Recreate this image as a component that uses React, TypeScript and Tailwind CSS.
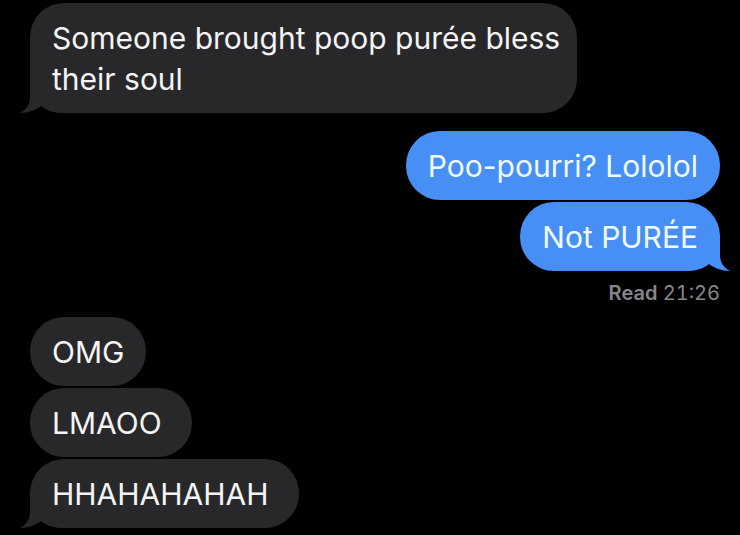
import React from 'react';
import clsx from 'clsx';

type Message = {
  text: string;
  sent?: boolean;
  tail?: boolean;
  long?: boolean;
};

const groups: { messages: Message[]; readAt?: string }[] = [
  { messages: [{ text: 'Someone brought poop purée bless their soul', tail: true, long: true }] },
  {
    messages: [
      { text: 'Poo-pourri? Lololol', sent: true },
      { text: 'Not PURÉE', sent: true, tail: true },
    ],
    readAt: '21:26',
  },
  { messages: [{ text: 'OMG' }, { text: 'LMAOO\u00a0' }, { text: 'HHAHAHAHAH\u00a0', tail: true }] },
];

const Tail: React.FC<{ sent?: boolean }> = ({ sent }) => (
  <svg
    viewBox="0 0 44 36"
    aria-hidden="true"
    className={clsx(
      'absolute bottom-0 h-9 w-11',
      sent ? '-right-2.5 -scale-x-100 fill-[#478ff5]' : '-left-2.5 fill-[#28282b]'
    )}
  >
    <path d="M10 0V20C10 27 7 32 0 36C8 36 16 33 21 29C26 33 32 36 44 36V0Z" />
  </svg>
);

const Bubble: React.FC<{ message: Message }> = ({ message }) => (
  <li
    className={clsx(
      'relative max-w-[79.3%] rounded-[34px] pt-[15px] pb-[13px] pl-[22px]',
      message.long ? 'pr-3' : 'pr-[22px]',
      message.sent ? 'self-end bg-[#478ff5] text-[#f0fbff]' : 'self-start bg-[#28282b] text-[#f4f4f4]'
    )}
  >
    {message.tail && <Tail sent={message.sent} />}
    <p className="relative text-[30px] leading-[41px]">{message.text}</p>
  </li>
);

const App: React.FC = () => {
  return (
    <main className="flex min-h-screen flex-col gap-[18px] bg-black pt-[3px] pr-5 pb-1.5 pl-[30px] font-['Inter',sans-serif]">
      {groups.map((group, i) => (
        <section key={i}>
          <ul className="flex flex-col gap-0.5">
            {group.messages.map((message) => (
              <Bubble key={message.text} message={message} />
            ))}
          </ul>
          {group.readAt && (
            <p className="mt-3.5 -mb-0.5 text-right text-[20px] leading-4 text-[#87878b] tabular-nums">
              <span className="font-semibold">Read</span> {group.readAt}
            </p>
          )}
        </section>
      ))}
    </main>
  );
};

export default App;
